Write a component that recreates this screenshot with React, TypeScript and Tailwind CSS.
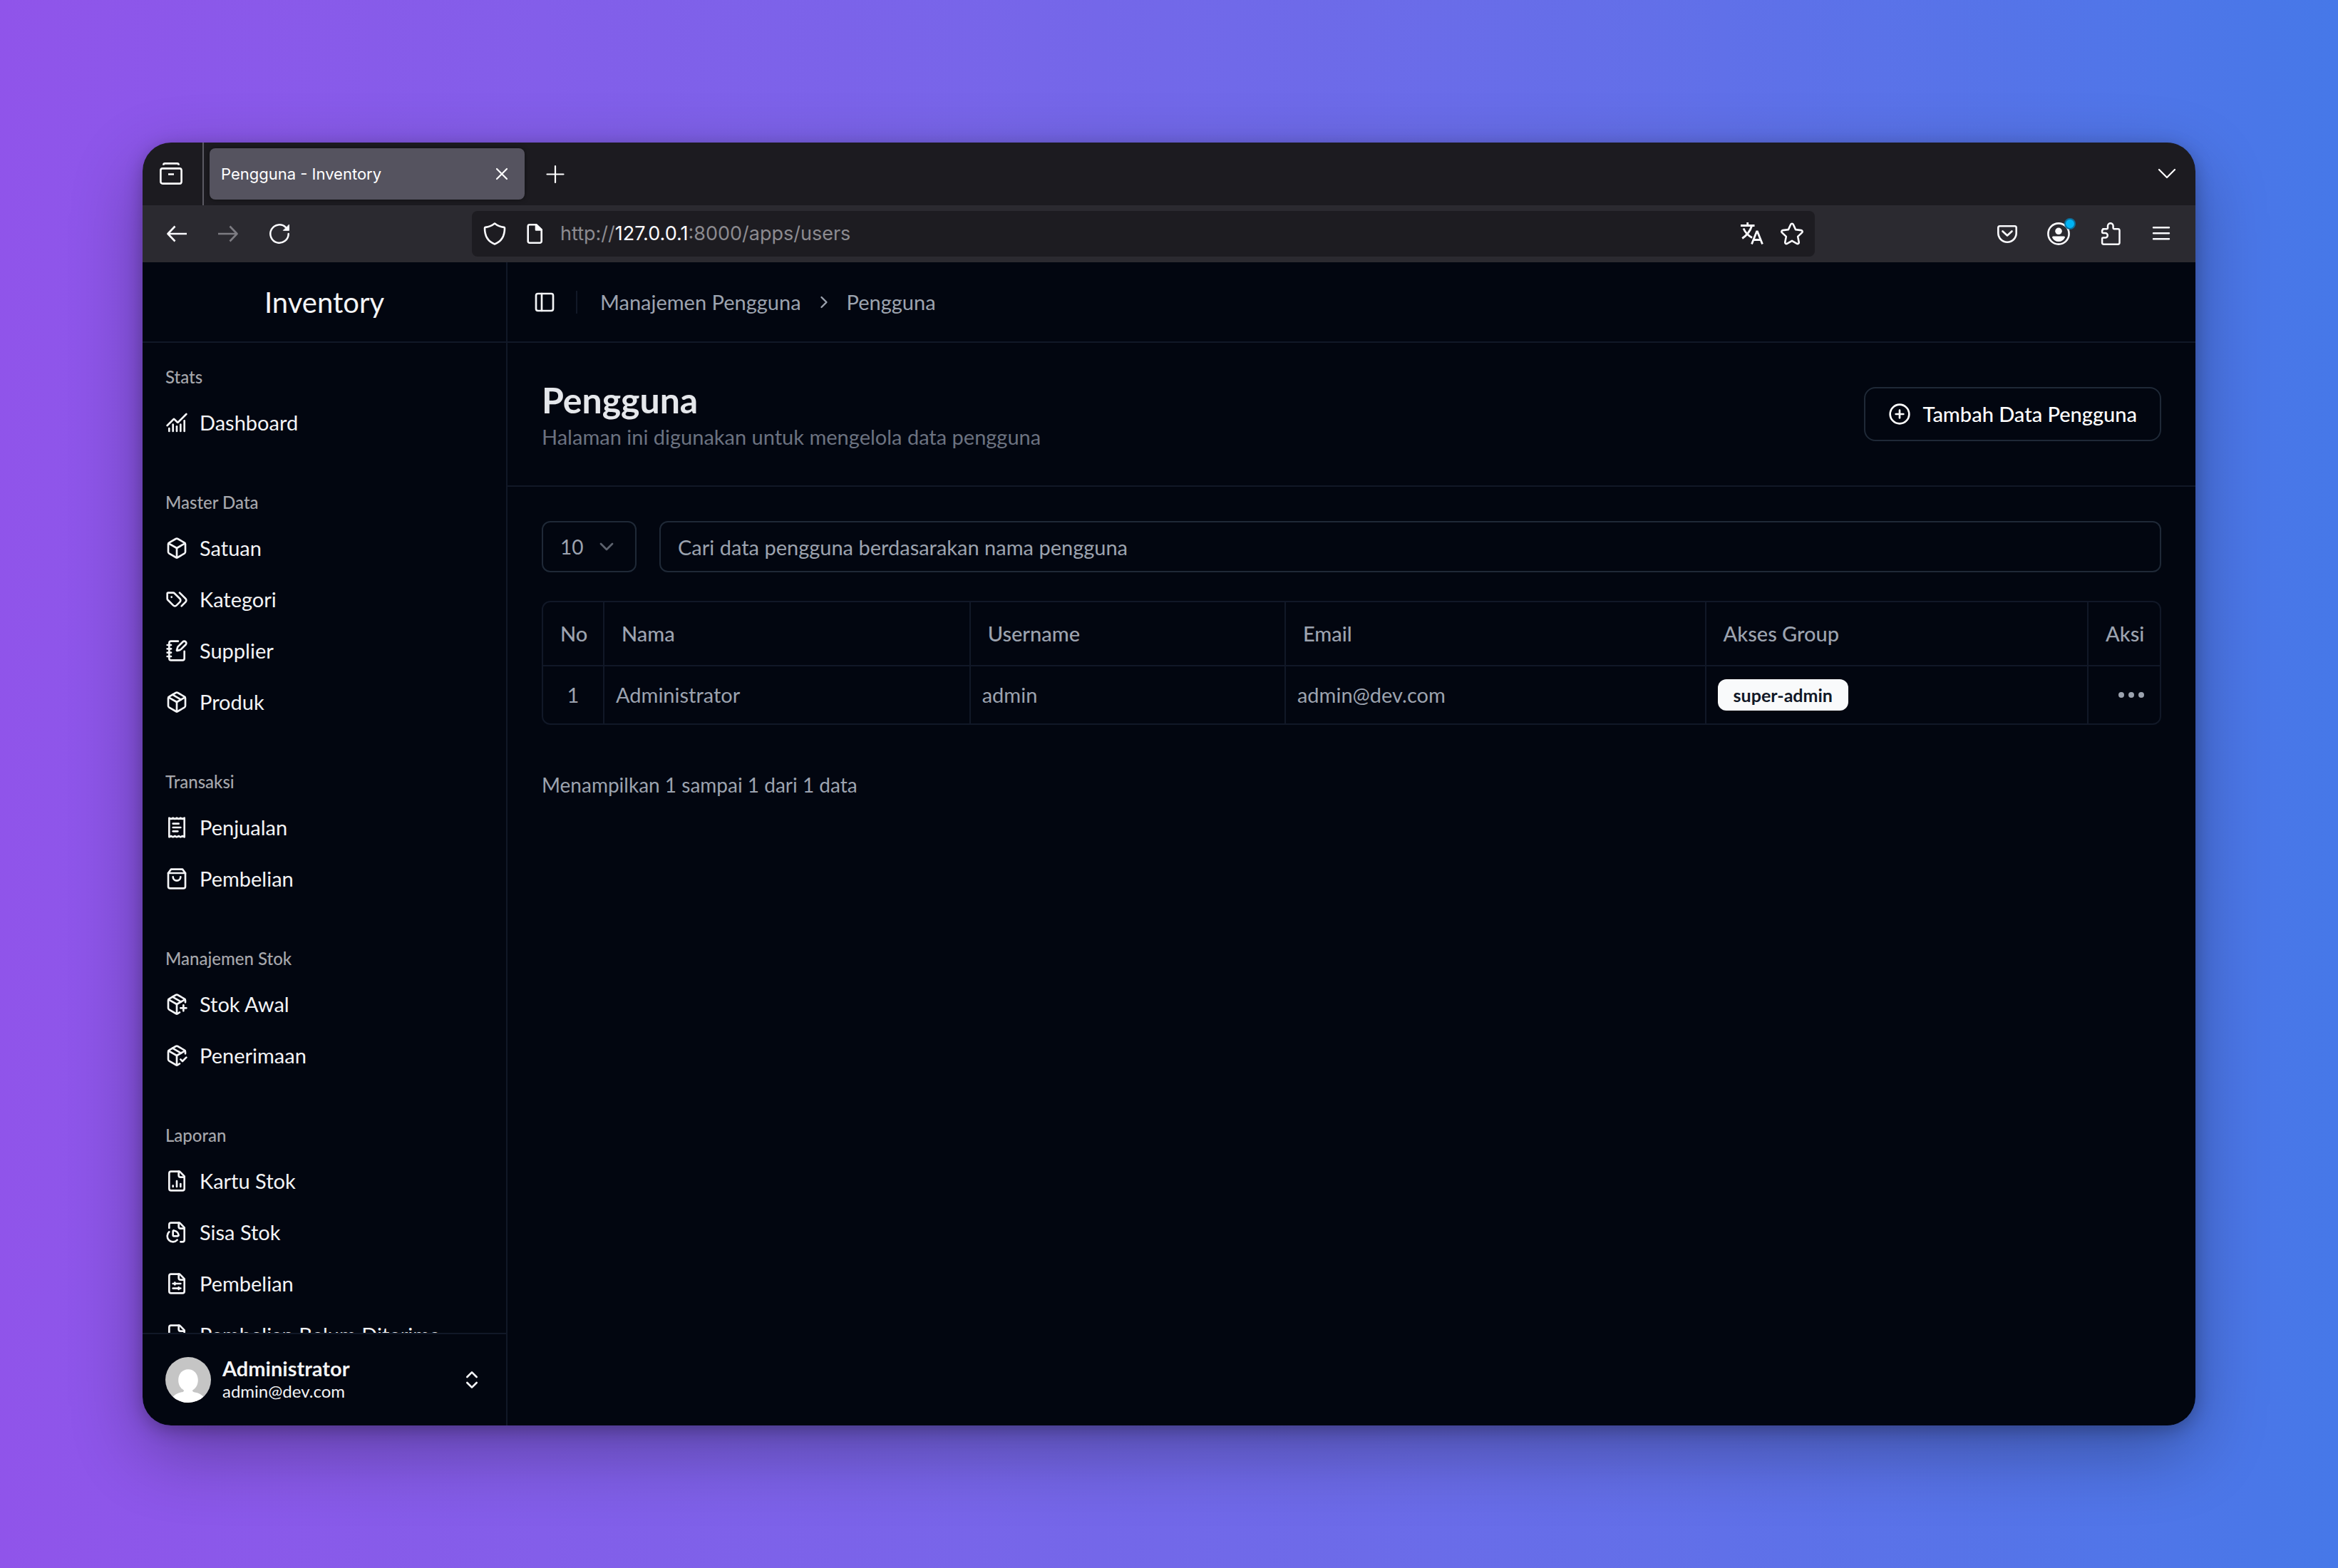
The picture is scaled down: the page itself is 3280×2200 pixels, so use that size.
import type { ComponentType, ReactNode, SVGProps } from "react";
import {
  Box,
  ChartNoAxesCombined,
  ChevronDown,
  ChevronRight,
  ChevronsUpDown,
  CirclePlus,
  Ellipsis,
  NotebookPen,
  Package,
  PackageCheck,
  PackagePlus,
  PanelLeft,
} from "lucide-react";

type IconType = ComponentType<{ className?: string }>;

function Glyph({ children, ...rest }: SVGProps<SVGSVGElement> & { children: ReactNode }) {
  return (
    <svg
      viewBox="0 0 32 32"
      fill="none"
      stroke="currentColor"
      strokeWidth="2.6"
      strokeLinecap="round"
      strokeLinejoin="round"
      className="size-8 shrink-0"
      aria-hidden="true"
      {...rest}
    >
      {children}
    </svg>
  );
}

function outline(...paths: string[]): IconType {
  return function OutlineIcon({ className }) {
    return (
      <Glyph viewBox="0 0 24 24" strokeWidth="2" className={className}>
        {paths.map((d) => (
          <path key={d} d={d} />
        ))}
      </Glyph>
    );
  };
}

const ShoppingBag = outline(
  "M6 2 3 6v14a2 2 0 0 0 2 2h14a2 2 0 0 0 2-2V6l-3-4Z",
  "M3 6h18",
  "M16 10a4 4 0 0 1-8 0",
);
const Tags = outline(
  "m15 5 6.300 6.300a2.400 2.400 0 0 1 0 3.400L17 19",
  "M9.586 5.586A2 2 0 0 0 8.172 5H3a1 1 0 0 0-1 1v5.172a2 2 0 0 0 .586 1.414L8.290 18.290a2.426 2.426 0 0 0 3.420 0l3.580-3.580a2.426 2.426 0 0 0 0-3.420z",
  "M6.500 9.400v.2",
);
const Receipt = outline(
  "M4 2v20l2-1 2 1 2-1 2 1 2-1 2 1 2-1 2 1V2l-2 1-2-1-2 1-2-1-2 1-2-1-2 1Z",
  "M14 8H8",
  "M16 12H8",
  "M13 16H8",
);
const fileBody = "M15 2H6a2 2 0 0 0-2 2v16a2 2 0 0 0 2 2h12a2 2 0 0 0 2-2V7Z";
const fileFold = "M14 2v4a2 2 0 0 0 2 2h4";
const FileBlank = outline(fileBody, fileFold);
const FileColumns = outline(fileBody, fileFold, "M8 18v-1", "M12 18v-6", "M16 18v-3");
const FileSliders = outline(fileBody, fileFold, "M8 12h8", "M10 11v2", "M8 17h8", "M14 16v2");
const FilePie = outline(
  "M16 22h2a2 2 0 0 0 2-2V7l-5-5H6a2 2 0 0 0-2 2v3.500",
  fileFold,
  "M4.017 11.512a6 6 0 1 0 8.466 8.475",
  "M9 16a1 1 0 0 1-1-1v-4c0-.552.450-1.008.995-.917a6 6 0 0 1 4.922 4.922c.091.544-.365.995-.917.995z",
);

const groups: { label: string; items: { name: string; icon: IconType }[] }[] = [
  { label: "Stats", items: [{ name: "Dashboard", icon: ChartNoAxesCombined }] },
  {
    label: "Master Data",
    items: [
      { name: "Satuan", icon: Box },
      { name: "Kategori", icon: Tags },
      { name: "Supplier", icon: NotebookPen },
      { name: "Produk", icon: Package },
    ],
  },
  {
    label: "Transaksi",
    items: [
      { name: "Penjualan", icon: Receipt },
      { name: "Pembelian", icon: ShoppingBag },
    ],
  },
  {
    label: "Manajemen Stok",
    items: [
      { name: "Stok Awal", icon: PackagePlus },
      { name: "Penerimaan", icon: PackageCheck },
    ],
  },
  {
    label: "Laporan",
    items: [
      { name: "Kartu Stok", icon: FileColumns },
      { name: "Sisa Stok", icon: FilePie },
      { name: "Pembelian", icon: FileSliders },
      { name: "Pembelian Belum Diterima", icon: FileBlank },
    ],
  },
];

function TabBar() {
  return (
    <div className="flex h-[88px] shrink-0 items-center bg-[#1c1b20] text-white">
      <button aria-label="Firefox View" className="flex h-full w-[86px] items-center border-r-2 border-[#5b5a63] pl-6">
        <Glyph>
          <path d="M5.200 3.600C5.400 2.200 6 1.400 7.200 1.400h17.600c1.200 0 1.800.8 2 2.200" strokeLinecap="butt" />
          <rect x="1.400" y="8.400" width="29.200" height="21.200" rx="2.600" />
          <path d="M12 16.500h8" strokeLinecap="butt" />
        </Glyph>
      </button>
      <div className="ml-2 flex h-[72px] w-[442px] items-center justify-between rounded-lg bg-[#55535f] pl-4 pr-5 shadow-[0_0_6px_rgba(0,0,0,0.5)]">
        <span className="font-[Inter,sans-serif] text-[22px] leading-8">Pengguna - Inventory</span>
        <button aria-label="Tutup tab" className="flex size-6 items-center justify-center">
          <Glyph className="size-6" viewBox="0 0 24 24" strokeWidth="2.200">
            <path d="m5 5 14 14M19 5 5 19" />
          </Glyph>
        </button>
      </div>
      <button aria-label="Tab baru" className="ml-7">
        <Glyph strokeWidth="2.200">
          <path d="M15 5v23M3.500 16.500h23" />
        </Glyph>
      </button>
      <button aria-label="Daftar tab" className="ml-auto mr-6">
        <Glyph strokeWidth="2.200">
          <path d="m5 10 11 11 11-11" />
        </Glyph>
      </button>
    </div>
  );
}

function Toolbar() {
  return (
    <div className="flex h-20 shrink-0 items-center bg-[#2b2a30] px-8 text-[#fbfbfe]">
      <div className="flex w-[430px] gap-10">
        <button aria-label="Kembali">
          <Glyph>
            <path d="M13.500 5.500 3.500 16l10 10.500M4 16h26" strokeLinecap="butt" />
          </Glyph>
        </button>
        <button aria-label="Maju" className="text-[#7d7c82]" disabled>
          <Glyph>
            <path d="m18.500 5.500 10 10.500-10 10.500M28 16H2" strokeLinecap="butt" />
          </Glyph>
        </button>
        <button aria-label="Muat ulang">
          <Glyph strokeWidth="2.500">
            <path d="M28.700 16A12.700 12.700 0 1 1 25 7.100" />
            <path d="M29.500 3.500v7.800h-7.800z" fill="currentColor" strokeWidth="1" />
          </Glyph>
        </button>
      </div>
      <div className="flex h-16 flex-1 items-center rounded-lg bg-[#1d1c21] px-4">
        <button aria-label="Perlindungan">
          <Glyph>
            <path d="M16 1.500c4 3.200 8 4.800 13 5.400.6.100 1 .6 1 1.200C30 19 25.500 27 16 30.500 6.500 27 2 19 2 8.100c0-.6.400-1.100 1-1.200 5-.6 9-2.200 13-5.400Z" />
          </Glyph>
        </button>
        <button aria-label="Info situs" className="ml-6">
          <Glyph>
            <path d="M9 3.300h9.500L25.700 10.500v16a2.300 2.300 0 0 1-2.300 2.300H9a2.300 2.300 0 0 1-2.300-2.300v-21A2.300 2.300 0 0 1 9 3.300Z" />
            <path d="M18 3.300v7.200h7.700z" fill="currentColor" />
          </Glyph>
        </button>
        <div
          role="textbox"
          aria-label="Alamat"
          className="ml-5 flex-1 font-[Inter,sans-serif] text-[27px] leading-10 text-[#8c8b90]"
        >
          http://<span className="text-[#fbfbfe]">127.0.0.1</span>:8000/apps/users
        </div>
        <button aria-label="Terjemahkan">
          <Glyph strokeLinecap="butt" strokeLinejoin="miter" strokeWidth="2.800">
            <path d="M0 4.500h19.500M9.700 0v5M4 8.500c2.500 6 6.500 10 12 13M15.500 5C13.500 12 9 17.800 2.200 22.500" />
            <path d="m15.500 30.500 7-17.500h1l7 17.500M18 24.500h10" />
          </Glyph>
        </button>
        <button aria-label="Markah" className="ml-6">
          <Glyph>
            <path d="M14.300 2.800c.7-1.500 2.700-1.500 3.400 0l3.400 7.300 7.900 1c1.600.2 2.200 2.200 1 3.300l-5.800 5.500 1.500 7.900c.3 1.600-1.400 2.800-2.800 2L16 25.900l-7 3.900c-1.400.8-3-.4-2.700-2l1.500-7.900L2 14.400c-1.200-1.100-.6-3.100 1-3.300l7.900-1z" />
          </Glyph>
        </button>
      </div>
      <div className="flex w-[502px] items-center justify-end gap-10">
        <button aria-label="Pocket">
          <Glyph>
            <path d="M5.500 5.300h21a2.200 2.200 0 0 1 2.200 2.200V15a12.700 12.700 0 0 1-25.400 0V7.500a2.200 2.200 0 0 1 2.200-2.200Z" />
            <path d="m9.500 12.500 6.500 6 6.500-6" />
          </Glyph>
        </button>
        <button aria-label="Akun" className="relative">
          <Glyph>
            <circle cx="16" cy="16" r="14.600" />
            <circle cx="16" cy="12.300" r="4.800" fill="currentColor" stroke="none" />
            <path
              d="M8.500 19.500h15a1.500 1.500 0 0 1 1.300 2A10 10 0 0 1 16 27a10 10 0 0 1-8.800-5.500 1.500 1.500 0 0 1 1.300-2Z"
              fill="currentColor"
              stroke="none"
            />
          </Glyph>
          <span className="absolute -right-2 -top-1.5 size-4 rounded-full border-2 border-[#0b6f9c] bg-[#00b3f4]" />
        </button>
        <button aria-label="Ekstensi">
          <Glyph strokeWidth="2.500">
            <path d="M6.300 9.300h5.500a1.200 1.200 0 0 0 1.200-1.200V5a3.800 3.800 0 0 1 7.600 0v3.100a1.200 1.200 0 0 0 1.200 1.200h5.500a2.200 2.200 0 0 1 2.200 2.200v17a2.200 2.200 0 0 1-2.200 2.200h-20a2.200 2.200 0 0 1-2.200-2.200v-5.800a1.200 1.200 0 0 1 1.200-1.200h3.200a3.300 3.300 0 0 0 0-6.600H6.300a1.200 1.200 0 0 1-1.200-1.200v-2.200a1.200 1.200 0 0 1 1.200-1.200Z" />
          </Glyph>
        </button>
        <button aria-label="Menu">
          <Glyph strokeWidth="2.400">
            <path d="M5 7.200h22M5 15.200h22M5 23.300h22" />
          </Glyph>
        </button>
      </div>
    </div>
  );
}

function Sidebar() {
  return (
    <aside className="flex w-[512px] shrink-0 flex-col border-r-2 border-[#111827]">
      <div className="flex h-[113px] shrink-0 items-center justify-center border-b-2 border-[#111827]">
        <span className="text-[40px] leading-[48px]">Inventory</span>
      </div>
      <nav className="flex min-h-0 flex-1 flex-col gap-12 overflow-hidden px-8 pt-4">
        {groups.map((group) => (
          <section key={group.label} className="shrink-0">
            <h2 className="text-[24px] font-medium leading-[64px] text-[#a6a7ac]">{group.label}</h2>
            <ul className="flex flex-col gap-2">
              {group.items.map(({ name, icon: Icon }) => (
                <li key={name}>
                  <a href="#" className="flex h-16 items-center gap-4 text-[29px] leading-10">
                    <Icon className="size-8 shrink-0" />
                    {name}
                  </a>
                </li>
              ))}
            </ul>
          </section>
        ))}
      </nav>
      <button className="flex shrink-0 items-center gap-4 border-t-2 border-[#111827] px-8 py-8 text-left">
        <svg viewBox="0 0 64 64" className="size-16 shrink-0 rounded-full" aria-hidden="true">
          <rect width="64" height="64" fill="#c5c5c5" />
          <path
            d="M32 17.300c8 0 13.800 6.200 13.800 15.200 0 6.500-3.200 11.500-7.800 14.200 0 2.800 3 2.300 7.500 3.800 5 1.700 8 5 9.500 7.500V64H9v-6c1.500-2.500 4.500-5.800 9.500-7.500 4.500-1.500 7.500-1 7.500-3.800-4.600-2.700-7.800-7.700-7.800-14.200 0-9 5.800-15.200 13.800-15.200Z"
            fill="#fff"
          />
        </svg>
        <span className="flex flex-1 flex-col">
          <span className="text-[29px] font-bold leading-8">Administrator</span>
          <span className="text-[24px] leading-8">admin@dev.com</span>
        </span>
        <ChevronsUpDown className="size-8 shrink-0" />
      </button>
    </aside>
  );
}

const users = [{ no: 1, name: "Administrator", username: "admin", email: "admin@dev.com", group: "super-admin" }];

function UserTable() {
  return (
    <div className="mt-10 overflow-hidden rounded-xl border-2 border-[#111827]">
      <table className="w-full table-fixed border-separate border-spacing-0 text-left text-[29px] leading-10 text-[#9ca3af]">
        <colgroup>
          <col className="w-[86px]" />
          <col className="w-[22.65%]" />
          <col className="w-[19.5%]" />
          <col className="w-[26%]" />
          <col />
          <col className="w-[100px]" />
        </colgroup>
        <thead>
          <tr className="h-[90px] [&>th]:border-b-2 [&>th]:border-[#111827] [&>th]:px-6 [&>th]:font-medium [&>th:not(:last-child)]:border-r-2">
            <th>No</th>
            <th>Nama</th>
            <th>Username</th>
            <th>Email</th>
            <th>Akses Group</th>
            <th>Aksi</th>
          </tr>
        </thead>
        <tbody>
          {users.map((user) => (
            <tr
              key={user.no}
              className="h-20 [&>td]:border-[#111827] [&>td]:px-4 [&>td:not(:last-child)]:border-r-2"
            >
              <td className="text-center">{user.no}</td>
              <td>{user.name}</td>
              <td>{user.username}</td>
              <td>{user.email}</td>
              <td>
                <span className="flex h-11 w-fit items-center rounded-xl bg-[#f9fafb] px-[22px] text-[25px] font-bold leading-8 text-[#111827]">
                  {user.group}
                </span>
              </td>
              <td>
                <button aria-label="Aksi pengguna" className="ml-auto flex">
                  <Ellipsis className="size-12" />
                </button>
              </td>
            </tr>
          ))}
        </tbody>
      </table>
    </div>
  );
}

function Main() {
  return (
    <main className="flex min-w-0 flex-1 flex-col">
      <header className="flex h-[113px] shrink-0 items-center border-b-2 border-[#111827] px-9 text-[#9ca3af]">
        <button aria-label="Buka atau tutup bilah sisi" className="text-[#f3f4f6]">
          <PanelLeft className="size-8" />
        </button>
        <div className="ml-7 h-8 w-0.5 bg-[#111827]" />
        <nav aria-label="Breadcrumb" className="ml-8 flex items-center gap-[18px] text-[29px] leading-10">
          <a href="#">Manajemen Pengguna</a>
          <ChevronRight className="size-7" />
          <span>Pengguna</span>
        </nav>
      </header>
      <div className="flex shrink-0 items-center justify-between border-b-2 border-[#111827] px-12 py-12">
        <div>
          <h1 className="text-[50px] font-bold leading-[64px] text-[#e5e7eb]">Pengguna</h1>
          <p className="text-[29px] leading-10 text-[#6b7280]">Halaman ini digunakan untuk mengelola data pengguna</p>
        </div>
        <button className="flex h-19 items-center gap-4 rounded-2xl border-2 border-[#1f2937] px-8 text-[29px] font-medium leading-10 text-white">
          <CirclePlus className="size-8" />
          Tambah Data Pengguna
        </button>
      </div>
      <div className="p-12">
        <div className="flex gap-8">
          <div className="relative w-[133px] shrink-0">
            <select
              aria-label="Jumlah data per halaman"
              className="h-18 w-full appearance-none rounded-xl border-2 border-[#1f2937] bg-transparent pl-6 text-[28px] leading-10 text-[#9ca3af]"
            >
              <option>10</option>
            </select>
            <ChevronDown className="pointer-events-none absolute right-[26px] top-5 size-8 text-[#5d636e]" />
          </div>
          <input
            type="search"
            aria-label="Cari pengguna"
            placeholder="Cari data pengguna berdasarakan nama pengguna"
            className="h-18 min-w-0 flex-1 rounded-xl border-2 border-[#1f2937] bg-transparent px-6 text-[29px] leading-10 placeholder:text-[#9ca3af]"
          />
        </div>
        <UserTable />
        <p className="mt-16 text-[28px] leading-10 text-[#9ca3af]">Menampilkan 1 sampai 1 dari 1 data</p>
      </div>
    </main>
  );
}

export default function App() {
  return (
    <div className="flex h-screen bg-linear-to-r from-[#9054ea] to-[#4678e8] p-[200px]">
      <div className="flex min-w-0 flex-1 flex-col overflow-hidden rounded-[40px] shadow-[0_36px_100px_rgba(0,0,0,0.3),0_6px_24px_rgba(0,0,0,0.25)]">
        <TabBar />
        <Toolbar />
        <div className="flex min-h-0 flex-1 bg-[#020610] font-[Lato,sans-serif] text-[#f3f4f6]">
          <Sidebar />
          <Main />
        </div>
      </div>
    </div>
  );
}
